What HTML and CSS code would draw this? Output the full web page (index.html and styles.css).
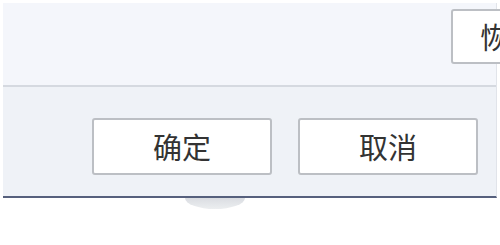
FILE: index.html
```html
<!DOCTYPE html>
<html lang="zh-CN">
<head>
  <meta charset="UTF-8">
  <title>设置</title>
  <link rel="stylesheet" href="styles.css">
</head>
<body>
<div class="dialog">
  <div class="toolbar">
    <button type="button" class="btn btn-reset">恢复</button>
  </div>
  <div class="footer">
    <button type="button" class="btn">确定</button>
    <button type="button" class="btn">取消</button>
  </div>
</div>
<div class="handle"></div>
</body>
</html>
```

FILE: styles.css
```css
body {
  margin: 0;
  padding: 3px 0 0 3px;
  background: #ffffff;
  font-family: "Noto Sans CJK SC", "Microsoft YaHei", sans-serif;
  overflow: hidden;
}

.dialog {
  width: 493px;
  border-right: 1px solid #e1e4ea;
  border-bottom: 2px solid #56607d;
}

.toolbar {
  height: 84px;
  box-sizing: border-box;
  padding: 6px 0 0 448px;
  background: #f4f6fb;
  border-bottom: 2px solid #d5d9e0;
  white-space: nowrap;
}

.footer {
  height: 109px;
  box-sizing: border-box;
  padding: 31px 18px 0 0;
  background: #eff2f7;
  display: flex;
  justify-content: flex-end;
  align-items: flex-start;
  gap: 26px;
}

.btn {
  width: 180px;
  height: 57px;
  background: #ffffff;
  border: 2px solid #bcbfc4;
  border-radius: 3px;
  color: #333333;
  font-family: "Noto Sans CJK SC", "Microsoft YaHei", sans-serif;
  font-size: 29px;
  line-height: 1;
  padding: 0;
}

.btn-reset {
  width: 116px;
  height: 55px;
}

.handle {
  width: 60px;
  height: 11px;
  margin-left: 182px;
  border-radius: 0 0 30px 30px / 0 0 11px 11px;
  background: linear-gradient(#dadde2, #eceef0);
}
```
